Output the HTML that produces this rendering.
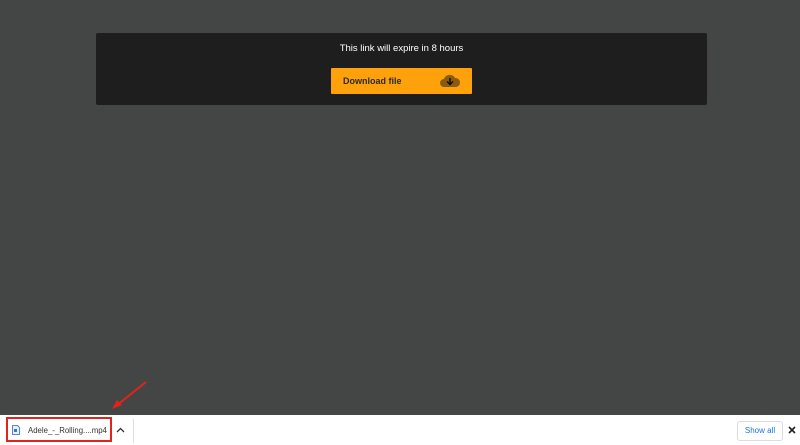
<!DOCTYPE html>
<html><head><style>
body{margin:0;width:800px;height:445px;background:#444545;position:relative;overflow:hidden;font-family:"Liberation Sans",sans-serif}
.card{position:absolute;left:96px;top:33px;width:611px;height:72px;background:#1e1e1e;border-radius:2px}
.t{position:absolute;left:0;width:100%;top:10px;text-align:center;color:#fff;font-size:9.5px}
.btn{position:absolute;left:235px;top:35px;width:141px;height:26px;background:#ffa10a;border-radius:1px}
.btn span{position:absolute;left:12px;top:8px;font-size:9px;font-weight:bold;color:#2a2a2a}
.bar{position:absolute;left:0;top:415px;width:800px;height:30px;background:#fff}
.box{position:absolute;left:6px;top:417px;width:102px;height:21px;border:2px solid #e0241b;box-sizing:content-box}
.fn{position:absolute;left:28px;top:426px;font-size:7.8px;color:#333;white-space:nowrap}
.sep{position:absolute;left:133px;top:419px;width:1px;height:24px;background:#ddd}
.sa{position:absolute;left:737px;top:421px;width:44px;height:18px;border:1px solid #dadce0;border-radius:3px;color:#1a73e8;font-size:8px;text-align:center;line-height:18px}
</style></head><body>
<div class="card"><div class="t">This link will expire in 8 hours</div>
<div class="btn"><span>Download file</span>
<svg style="position:absolute;left:108px;top:4px" width="22" height="18" viewBox="0 0 22 18"><path d="M5 15a4 4 0 0 1 0-8 6 6 0 0 1 11-1 4.5 4.5 0 0 1 1 9z" fill="#8a5a10"/><path d="M11 6v6M8 9.5l3 3 3-3" stroke="#111" stroke-width="1.5" fill="none"/></svg></div></div>
<svg style="position:absolute;left:110px;top:380px" width="40" height="32"><path d="M36 2L6 26" stroke="#e0241b" stroke-width="2"/><path d="M2 29l10-4-5-5z" fill="#e0241b"/></svg>
<div class="bar"></div>
<div class="box"></div>
<svg style="position:absolute;left:12px;top:425px" width="8" height="10"><path d="M0.5 .5h5l2 2v7h-7z" fill="#e8f0fb" stroke="#5a86c5"/><rect x="2" y="4" width="3" height="3" fill="#3a76c8"/></svg>
<div class="fn">Adele_-_Rolling....mp4</div>
<svg style="position:absolute;left:116px;top:427px" width="9" height="6"><path d="M1 5l3.5-3.5L8 5" stroke="#333" stroke-width="1.3" fill="none"/></svg>
<div class="sep"></div>
<div class="sa">Show all</div>
<svg style="position:absolute;left:788px;top:426px" width="8" height="8"><path d="M1 1l6 6M7 1l-6 6" stroke="#222" stroke-width="1.6"/></svg>
</body></html>
